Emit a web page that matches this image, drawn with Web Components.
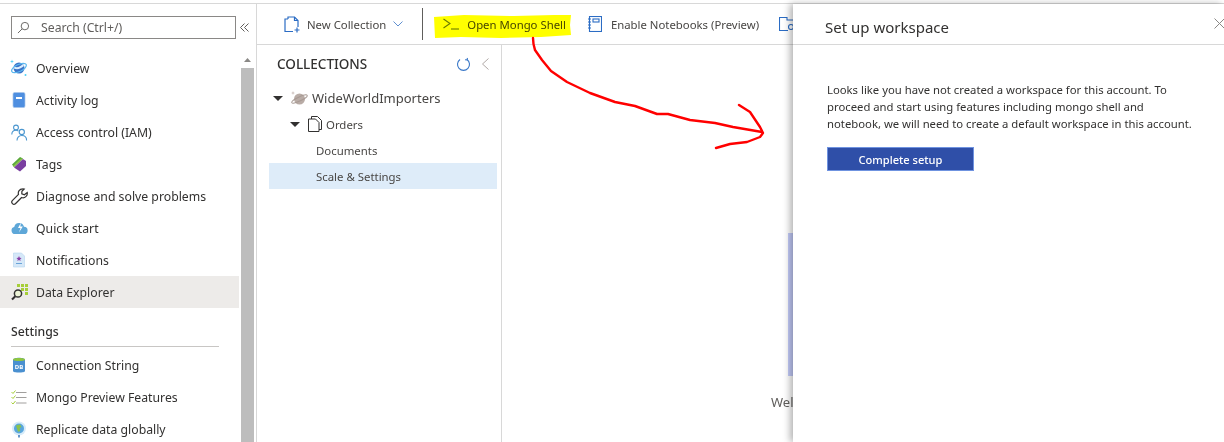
<!DOCTYPE html>
<html>
<head>
<meta charset="utf-8">
<title>Set up workspace</title>
<style>
  html, body { margin: 0; height: 100%; overflow: hidden; background: #fff; }
  body { font-family: "Noto Sans", "Open Sans", sans-serif; font-size: 12.25px; color: #323130; }
  svg { display: block; }
</style>
</head>
<body>
<az-shell>
  <az-nav slot="nav">
    <az-nav-item label="Overview">
      <svg width="18" height="18" viewBox="0 0 18 18"><circle cx="9" cy="9" r="5.500" fill="#3b73c9"/><path d="M4 7.500c3 1.500 6 .5 9-2.500l1 2c-3 3-7 4-10 2.500z" fill="#dbeefc"/><ellipse cx="9" cy="9" rx="8" ry="3.500" fill="none" stroke="#5cb8ee" stroke-width="1.200" transform="rotate(-25 9 9)"/><path d="M2 .5l.5 1.500L4 2.500l-1.500.5L2 4.500 1.500 3 0 2.500 1.500 2z" fill="#50d0f5"/><circle cx="15.500" cy="16" r="1" fill="#50d0f5"/></svg>
    </az-nav-item>
    <az-nav-item label="Activity log">
      <svg width="16" height="16" viewBox="0 0 16 16"><rect x="2" y=".5" width="12" height="15" rx="1.500" fill="#4f8fe0" stroke="#a8c4ea" stroke-width=".7"/><rect x="5" y="5" width="6" height="2" fill="#fff"/></svg>
    </az-nav-item>
    <az-nav-item label="Access control (IAM)">
      <svg width="17" height="17" viewBox="0 0 17 17" fill="none" stroke="#4a96cf" stroke-width="1.100"><circle cx="5" cy="3.500" r="2.400"/><path d="M.8 10.500c0-3 2-4.200 4.200-4.200 1 0 1.800.2 2.400.8"/><circle cx="10.800" cy="8" r="2.600"/><path d="M6 16.500c0-3 2-5 4.800-5s4.800 2 4.800 5"/></svg>
    </az-nav-item>
    <az-nav-item label="Tags">
      <svg width="16" height="16" viewBox="0 0 16 16"><path d="M1 8.500L9 1l3 1.500-9 8.500z" fill="#59a83a"/><path d="M2 10l8-7.500L12 3l-9 8z" fill="#8bc34a"/><path d="M3 11.500l9-8.500 3 2v5l-6 5.500z" fill="#7a3fa0"/></svg>
    </az-nav-item>
    <az-nav-item label="Diagnose and solve problems">
      <svg width="17" height="17" viewBox="0 0 17 17" fill="none" stroke="#323130" stroke-width="1.200"><path d="M11.500 .8a4.300 4.300 0 0 0-4 5.600L1.300 12.600a2.200 2.200 0 0 0 3.100 3.100l6.200-6.200A4.300 4.300 0 0 0 16.200 4.500l-2.800 2.300-2.600-1 .1-2.600 2.300-2.200a4.300 4.300 0 0 0-1.700-.2z"/></svg>
    </az-nav-item>
    <az-nav-item label="Quick start">
      <svg width="17" height="15" viewBox="0 0 17 15"><path d="M4 13a3.500 3.500 0 0 1-.8-6.900A5 5 0 0 1 13 5.800 3.600 3.600 0 0 1 13 13z" fill="#5ea7d8"/><path d="M10 1.500L7 7h2.500L8 11.500l3.800-6H9.300z" fill="#fff"/></svg>
    </az-nav-item>
    <az-nav-item label="Notifications">
      <svg width="16" height="16" viewBox="0 0 16 16"><path d="M2.500 1h8l3 3v11h-11z" fill="#d6e8f8" stroke="#b4d3ee" stroke-width=".6"/><path d="M8 4l.8 1.800 1.800.2-1.400 1.200.4 1.800L8 8.100 6.400 9l.4-1.800L5.400 6l1.800-.2z" fill="#8a3fa8"/><rect x="5" y="11" width="6" height="1" fill="#6aa4d8"/></svg>
    </az-nav-item>
    <az-nav-item label="Data Explorer" selected>
      <svg width="17" height="17" viewBox="0 0 17 17"><g fill="#a6ce39"><rect x="6" y="0" width="3" height="3"/><rect x="10" y="0" width="3" height="3"/><rect x="14" y="0" width="3" height="3"/><rect x="10" y="4" width="3" height="3"/><rect x="14" y="4" width="3" height="3"/><rect x="14" y="8" width="3" height="3"/></g><circle cx="7" cy="9.500" r="3.600" fill="#eef5d8" stroke="#323130" stroke-width="1.500"/><path d="M4.300 12.200L1 15.500" stroke="#323130" stroke-width="2"/></svg>
    </az-nav-item>
    <az-nav-head>Settings</az-nav-head>
    <az-nav-item label="Connection String">
      <svg width="16" height="16" viewBox="0 0 16 16"><path d="M2 3c0-3 12-3 12 0v11c0 2-12 2-12 0z" fill="#4a90d0"/><path d="M2 2.500c0-2 12-2 12 0s-12 2-12 0z" fill="#8fc63f"/><text x="8" y="12" font-size="6" font-weight="700" text-anchor="middle" fill="#fff" font-family="Noto Sans, sans-serif">DB</text></svg>
    </az-nav-item>
    <az-nav-item label="Mongo Preview Features">
      <svg width="16" height="14" viewBox="0 0 16 14" fill="none"><path d="M.5 2l1.500 1.500L4.500.5M.5 7l1.500 1.500L4.500 5.500M.5 12.500L2 14l2.500-3" stroke="#a6ce39"/><path d="M5 2.500h10.500M5 7.500h10.500M5 13h10.500" stroke="#a19f9d" stroke-width="1.200"/></svg>
    </az-nav-item>
    <az-nav-item label="Replicate data globally">
      <svg width="16" height="17" viewBox="0 0 16 17"><circle cx="8" cy="7.500" r="7" fill="#d8ecf9"/><circle cx="8" cy="7.500" r="5" fill="#59a6dc"/><path d="M5 4.500l4-1 1.500 2.500-2 1 .8 3-2.300.8-1-3z" fill="#8bc34a"/><rect x="7.200" y="14" width="1.600" height="2.500" fill="#3f7fc0"/></svg>
    </az-nav-item>
  </az-nav>

  <az-toolbar slot="toolbar">
    <az-tool label="New Collection" gap="7" style="margin-left:27px">
      <svg width="16" height="17" viewBox="0 0 16 17" fill="none" stroke="#2b6cc4" stroke-width="1.200"><path d="M4 3V1h6.500L14 4.500V11"/><path d="M10.500 1v3.500H14"/><path d="M4 3H1v12.500h8"/><path d="M13 11.500v5M10.500 14h5"/></svg>
    </az-tool>
    <svg width="10" height="6" viewBox="0 0 10 6" fill="none" stroke="#5f8fd0" style="margin-left:7px"><path d="M.5.500L5 5 9.500.500"/></svg>
    <az-tool-sep></az-tool-sep>
    <az-tool label="Open Mongo Shell" gap="8" style="margin-left:20px">
      <svg width="16" height="12" viewBox="0 0 16 12" fill="none" stroke="#6a7a10" stroke-width="1.100"><path d="M.5 1L7 5.500.5 10"/><path d="M8 11h8"/></svg>
    </az-tool>
    <az-tool label="Enable Notebooks (Preview)" gap="9" style="margin-left:22px">
      <svg width="14" height="16" viewBox="0 0 14 16" fill="none" stroke="#2b6cc4" stroke-width="1.100"><rect x="1.500" y=".5" width="12" height="15"/><rect x="5" y="3" width="6" height="3"/><path d="M0 3h3M0 6h3M0 9h3M0 12h3"/></svg>
    </az-tool>
    <az-tool style="margin-left:20px">
      <svg width="16" height="16" viewBox="0 0 16 16" fill="none" stroke="#2b6cc4" stroke-width="1.100"><path d="M9 14.500H.5v-13H8V4h7.500v5"/><circle cx="12" cy="11" r="2.500"/></svg>
    </az-tool>
  </az-toolbar>

  <az-tree slot="tree">
    <az-tree-row depth="0" caret label="WideWorldImporters">
      <svg width="17" height="15" viewBox="0 0 17 15"><circle cx="8.500" cy="8" r="5.500" fill="#b9aca6"/><ellipse cx="8.500" cy="8" rx="8.500" ry="2" fill="none" stroke="#a89a94" transform="rotate(-25 8.500 8)"/><path d="M2 0l.5 1.500L4 2l-1.500.5L2 4l-.5-1.500L0 2l1.500-.5z" fill="#c9bdb8"/></svg>
    </az-tree-row>
    <az-tree-row depth="1" caret label="Orders">
      <svg width="14" height="16" viewBox="0 0 14 16" fill="none" stroke="#323130"><path d="M3.500 3V.5h6l4 4v9H11"/><path d="M.5 3h7l3.500 3.500v9H.5z"/></svg>
    </az-tree-row>
    <az-tree-row depth="2" label="Documents"></az-tree-row>
    <az-tree-row depth="2" label="Scale &amp; Settings" selected></az-tree-row>
  </az-tree>

  <az-welcome slot="main"></az-welcome>

  <az-blade slot="blade" heading="Set up workspace">
    Looks like you have not created a workspace for this account. To proceed and start using features including mongo shell and notebook, we will need to create a default workspace in this account.
    <az-button slot="action">Complete setup</az-button>
  </az-blade>

  <az-scribble slot="scribble"></az-scribble>
</az-shell>

<script>
  function define(name, css, html, extra) {
    let template = document.createElement("template");
    template.innerHTML = `<style>${css}</style>${html}`;
    class El extends HTMLElement {
      constructor() {
        super();
        this._root = this.attachShadow({ mode: "open" });
        this._root.appendChild(template.content.cloneNode(true));
      }
      connectedCallback() {
        if (extra) extra(this, this._root);
      }
    }
    customElements.define(name, El);
  }

  define("az-shell", `
    :host { display: block; position: relative; width: 1224px; height: 442px; padding-top: 3px; box-sizing: border-box; overflow: hidden; }
    .frame { display: grid; grid-template-columns: 257px 1fr; height: 439px; border-top: 1px solid #d8d8d8; box-sizing: border-box; }
    .work { display: grid; grid-template-rows: 41px 1fr; grid-template-columns: 245px 1fr; min-width: 0; }
    .bar { grid-column: 1 / 3; }
  `, `
    <div class="frame">
      <slot name="nav"></slot>
      <div class="work">
        <div class="bar"><slot name="toolbar"></slot></div>
        <slot name="tree"></slot>
        <slot name="main"></slot>
      </div>
    </div>
    <slot name="blade"></slot>
    <slot name="scribble"></slot>
  `);

  define("az-nav", `
    :host { display: block; position: relative; border-right: 1px solid #d8d8d8; overflow: hidden; }
    .top { display: flex; align-items: flex-start; height: 48px; box-sizing: border-box; padding: 12px 0 0 11px; }
    .search { display: flex; align-items: center; box-sizing: border-box; width: 225px; height: 23px; border: 1px solid #8a8886; padding-left: 5px; color: #605e5c; }
    .search span { margin-left: 11px; }
    .collapse { margin: 7px 0 0 4px; }
    .wrap { display: grid; grid-template-columns: 241px 13px; }
    .scroll { background: #f1f1f1; display: flex; flex-direction: column; align-items: center; height: 400px; }
    .up { width: 13px; height: 16px; display: flex; align-items: center; justify-content: center; background: #fff; }
    .thumb { width: 13px; flex: 1; background: #bdbdbd; }
  `, `
    <div class="top">
      <div class="search">
        <svg width="13" height="13" viewBox="0 0 14 14" fill="none" stroke="#605e5c"><circle cx="8.500" cy="5.500" r="4"/><path d="M5.500 8.500L1 13"/></svg>
        <span>Search (Ctrl+/)</span>
      </div>
      <svg class="collapse" width="9" height="9" viewBox="0 0 9 9" fill="none" stroke="#605e5c"><path d="M4.500.5L.5 4.500l4 4M8.500.5l-4 4 4 4"/></svg>
    </div>
    <div class="wrap">
      <div><slot></slot></div>
      <div class="scroll"><div class="up"><svg width="7" height="4" viewBox="0 0 7 4"><path d="M0 4L3.500 0 7 4z" fill="#8a8886"/></svg></div><div class="thumb"></div></div>
    </div>
  `);

  define("az-nav-item", `
    :host { display: flex; align-items: center; height: 32px; width: 239px; padding-left: 10px; box-sizing: border-box; }
    :host([selected]) { background: #edebe9; }
    .icon { width: 18px; height: 18px; display: flex; align-items: center; justify-content: center; flex: none; }
    .label { margin-left: 8px; white-space: nowrap; }
  `, `<span class="icon"><slot></slot></span><span class="label"></span>`, (el, root) => {
    root.querySelector(".label").textContent = el.getAttribute("label");
  });

  define("az-nav-head", `
    :host { display: block; height: 41px; box-sizing: border-box; padding: 15px 0 0 11px; }
    .t { display: block; line-height: 17px; height: 23px; font-weight: 500; }
    .rule { display: block; height: 1px; width: 208px; background: #c8c6c4; }
  `, `<span class="t"><slot></slot></span><span class="rule"></span>`);

  define("az-toolbar", `
    :host { display: flex; align-items: center; height: 41px; box-sizing: border-box; border-bottom: 1px solid #d8d8d8; white-space: nowrap; color: #484644; font-size: 11.350px; }
  `, `<slot></slot>`);

  define("az-tool", `
    :host { display: inline-flex; align-items: center; flex: none; }
    .label { white-space: nowrap; }
  `, `<slot></slot><span class="label"></span>`, (el, root) => {
    let label = root.querySelector(".label");
    label.textContent = el.getAttribute("label") || "";
    label.style.marginLeft = (el.getAttribute("gap") || 0) + "px";
  });

  define("az-tool-sep", `
    :host { display: block; flex: none; width: 1px; height: 32px; background: #605e5c; margin-left: 19px; }
  `, ``);

  define("az-tree", `
    :host { display: block; box-sizing: border-box; border-right: 1px solid #d8d8d8; padding: 0 4px 0 12px; }
    .head { display: flex; align-items: center; height: 38px; padding: 0 8px 0 8px; }
    .head span { flex: 1; font-size: 13.500px; font-weight: 500; color: #323130; }
    .refresh { margin-right: 11px; }
    .rows { margin-top: 2px; }
  `, `
    <div class="head">
      <span>COLLECTIONS</span>
      <svg class="refresh" width="15" height="15" viewBox="0 0 15 15" fill="none" stroke="#3a78c8" stroke-width="1.100"><path d="M4 2.500a6 6 0 1 0 7 0"/><path d="M11.500 1l-.5 2-2-.2"/></svg>
      <svg width="7" height="12" viewBox="0 0 7 12" fill="none" stroke="#b0a8a6"><path d="M6.500.5L.5 6l6 5.500"/></svg>
    </div>
    <div class="rows"><slot></slot></div>
  `);

  define("az-tree-row", `
    :host { display: flex; align-items: center; height: 26px; white-space: nowrap; color: #484644; font-size: 11.400px; }
    :host([selected]) { background: #deecf9; }
    .caret { width: 0; height: 0; border-left: 5px solid transparent; border-right: 5px solid transparent; border-top: 5px solid #323130; margin-right: 8px; flex: none; }
    .label { margin-left: 4px; }
    :host([depth="0"]) { padding-left: 4px; font-size: 13px; }
    :host([depth="1"]) { padding-left: 21px; }
    :host([depth="2"]) { padding-left: 47px; }
    :host([depth="2"]) .label { margin-left: 0; }
  `, `<span class="caret"></span><slot></slot><span class="label"></span>`, (el, root) => {
    root.querySelector(".label").textContent = el.getAttribute("label");
    if (!el.hasAttribute("caret")) root.querySelector(".caret").remove();
  });

  define("az-welcome", `
    :host { display: block; overflow: hidden; padding: 188px 0 0 286px; }
    .art { width: 60px; height: 143px; background: #c4ccfa; }
    .msg { margin: 17px 0 0 -17px; font-size: 13px; color: #605e5c; white-space: nowrap; }
  `, `<div class="art"></div><div class="msg">Welcome to Azure Cosmos DB</div>`);

  define("az-blade", `
    :host { display: block; position: absolute; left: 793px; top: 4px; right: 0; bottom: 0; background: #fff; box-shadow: -3px 0 7px rgba(0,0,0,.3); }
    header { height: 41px; box-sizing: border-box; border-bottom: 1px solid #d8d8d8; display: flex; align-items: center; padding-left: 32px; position: relative; }
    h2 { margin: 0; font-size: 15px; font-weight: 400; color: #323130; position: relative; top: 3px; }
    .close { position: absolute; right: -1px; top: 14px; }
    .body { padding: 36px 30px 0 34px; font-size: 11.300px; line-height: 17px; color: #323130; }
    .act { margin-top: 15px; }
  `, `
    <header><h2></h2>
      <svg class="close" width="11" height="11" viewBox="0 0 11 11" fill="none" stroke="#8a8886"><path d="M.5.500l10 10M10.500.500l-10 10"/></svg>
    </header>
    <div class="body"><slot></slot><div class="act"><slot name="action"></slot></div></div>
  `, (el, root) => {
    root.querySelector("h2").textContent = el.getAttribute("heading");
  });

  define("az-button", `
    :host { display: flex; align-items: center; justify-content: center; box-sizing: border-box; width: 147px; height: 24px; background: #2f4fa8; border: 1px solid #6f93e0; color: #fff; font-size: 11.100px; font-weight: 500; }
  `, `<slot></slot>`);

  define("az-scribble", `
    :host { display: block; position: absolute; left: 0; top: 0; width: 1224px; height: 442px; pointer-events: none; }
    svg { position: absolute; left: 0; top: 0; }
  `, `
    <svg width="1224" height="442" viewBox="0 0 1224 442" fill="none">
      <path d="M434 17l30-2 50 1 40-1 17 0-1 10 1 10-30 2-40 1-40-1-26 1z" fill="#ffff00" style="mix-blend-mode:multiply"/>
      <path d="M533 38c0 5 1 9 2 12l7 10 9 11 16 11 23 11 25 9 20 4 22 8 11 0 22 6 25 3 18 4 29 5M739 105l11 7 10 15 3 6-3 4-13 5-17 2-14 4" stroke="#ff0000" stroke-width="2.400" stroke-linejoin="round" stroke-linecap="round"/>
    </svg>
  `);
</script>
</body>
</html>
